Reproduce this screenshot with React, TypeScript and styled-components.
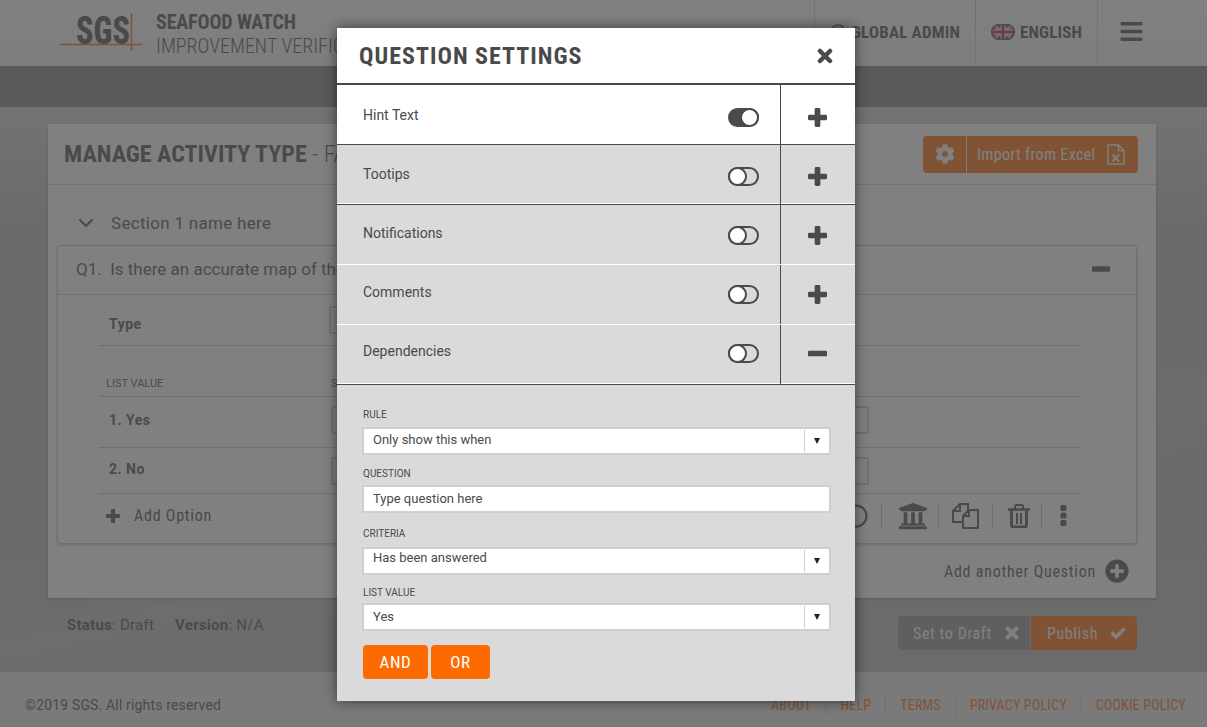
import React from 'react';
import styled, { createGlobalStyle, css } from 'styled-components';
import { FaBars, FaCog, FaPlusCircle, FaRegCircle, FaRegUserCircle, FaUniversity } from 'react-icons/fa';
import { ChevronDown } from 'lucide-react';

const GlobalStyle = createGlobalStyle`
  html, body {
    margin: 0;
    padding: 0;
    height: 100%;
    overflow: hidden;
  }
  body {
    font-family: Roboto, "Liberation Sans", sans-serif;
    color: #4a4a4a;
  }
  *, *::before, *::after {
    box-sizing: border-box;
  }
`;

const condensed = css`
  font-family: Roboto, "Liberation Sans", sans-serif;
  font-stretch: 75%;
`;

const settings = [
  { label: 'Hint Text', on: true, open: false, line: 'dark' },
  { label: 'Tootips', on: false, open: false, line: 'dark' },
  { label: 'Notifications', on: false, open: false, line: 'light' },
  { label: 'Comments', on: false, open: false, line: 'light' },
  { label: 'Dependencies', on: false, open: true, line: 'dark' },
];

const footerLinks = ['About', 'Help', 'Terms', 'Privacy Policy', 'Cookie Policy'];

const PlusIcon = ({ size }: { size: number }) => (
  <svg width={size} height={size} viewBox="0 0 20 20" fill="currentColor">
    <rect x="7" y="0" width="6" height="20" rx="1.5" />
    <rect x="0" y="7" width="20" height="6" rx="1.5" />
  </svg>
);

const MinusIcon = ({ size }: { size: number }) => (
  <svg width={size} height={size} viewBox="0 0 20 20" fill="currentColor">
    <rect x="0" y="7" width="20" height="6" rx="1" />
  </svg>
);

const CloseIcon = ({ size }: { size: number }) => (
  <svg width={size} height={size} viewBox="0 0 16 16" fill="none" stroke="currentColor" strokeWidth="4.5" strokeLinecap="round">
    <path d="M3 3L13 13M13 3L3 13" />
  </svg>
);

const CheckIcon = () => (
  <svg width="16" height="12" viewBox="0 0 16 12" fill="none" stroke="currentColor" strokeWidth="3.5">
    <path d="M1.5 5.5L6 10L14.5 1.5" />
  </svg>
);

const ExcelIcon = () => (
  <svg width="18" height="21" viewBox="0 0 18 21" fill="none" stroke="currentColor" strokeWidth="1.5">
    <path d="M1 1H11.5L17 6.5V20H1Z" />
    <path d="M11.5 1V6.5H17" />
    <path d="M5.5 10.5L12 17.5M12 10.5L5.5 17.5" strokeWidth="2" />
  </svg>
);

const FilesIcon = () => (
  <svg width="27" height="26" viewBox="0 0 27 26" fill="none" stroke="currentColor" strokeWidth="2">
    <path d="M16 7V1H8L1 8V19H10" />
    <path d="M8 1V8H1" />
    <path d="M17 7H26V25H11V13Z" />
    <path d="M17 7V13H11" />
  </svg>
);

const TrashIcon = () => (
  <svg width="22" height="24" viewBox="0 0 22 24" fill="none" stroke="currentColor">
    <path d="M7 5V2.5C7 1.7 7.7 1 8.5 1H13.5C14.3 1 15 1.7 15 2.5V5" strokeWidth="2" />
    <path d="M0 5.5H22" strokeWidth="2.5" />
    <path d="M3.5 6V21C3.5 22.1 4.4 23 5.5 23H16.5C17.6 23 18.5 22.1 18.5 21V6" strokeWidth="3" />
    <path d="M9 9V20M13 9V20" strokeWidth="2" />
  </svg>
);

const KebabIcon = () => (
  <svg width="7" height="21" viewBox="0 0 7 21" fill="currentColor">
    <rect x="0.5" y="0" width="6" height="6" rx="1.5" />
    <rect x="0.5" y="7.5" width="6" height="6" rx="1.5" />
    <rect x="0.5" y="15" width="6" height="6" rx="1.5" />
  </svg>
);

const UkFlag = () => (
  <FlagSvg viewBox="0 0 24 16">
    <clipPath id="pill">
      <rect width="24" height="16" rx="8" />
    </clipPath>
    <g clipPath="url(#pill)">
      <rect width="24" height="16" fill="#2b3a8c" />
      <path d="M0 0L24 16M24 0L0 16" stroke="#fff" strokeWidth="3" />
      <path d="M0 0L24 16M24 0L0 16" stroke="#d0212b" strokeWidth="1" />
      <path d="M12 0V16M0 8H24" stroke="#fff" strokeWidth="5" />
      <path d="M12 0V16M0 8H24" stroke="#d0212b" strokeWidth="3" />
    </g>
    <rect x="0.75" y="0.75" width="22.5" height="14.5" rx="7.25" fill="none" stroke="#555" strokeWidth="1.5" />
  </FlagSvg>
);

const SgsLogo = () => (
  <LogoSvg viewBox="0 -4 82 44">
    <text x="16" y="31" fontFamily="Roboto, sans-serif" fontWeight="800" fontSize="38" fontStretch="75%" fill="#4a4a4a" textLength="54" lengthAdjust="spacingAndGlyphs">
      SGS
    </text>
    <path d="M0 31.5H82M71.5 0V38" stroke="#ff6a00" strokeWidth="1.5" fill="none" />
  </LogoSvg>
);

const App: React.FC = () => {
  return (
    <Page>
      <GlobalStyle />
      <TopBar>
        <Brand>
          <SgsLogo />
          <BrandText>
            <BrandName>SEAFOOD WATCH</BrandName>
            <BrandSub>IMPROVEMENT VERIFICATION</BrandSub>
          </BrandText>
        </Brand>
        <NavItem $width={161}>
          <FaRegUserCircle size={16} />
          GLOBAL ADMIN
        </NavItem>
        <NavItem $width={122}>
          <UkFlag />
          ENGLISH
        </NavItem>
        <MenuItem>
          <FaBars size={25} />
        </MenuItem>
      </TopBar>
      <SubBar />

      <Main>
        <Card>
          <CardHeader>
            <CardTitle>
              <strong>MANAGE ACTIVITY TYPE</strong> - FARM ASSESSMENT
            </CardTitle>
            <ImportButton>
              <GearCell>
                <FaCog size={20} />
              </GearCell>
              <ImportCell>
                Import from Excel
                <ExcelIcon />
              </ImportCell>
            </ImportButton>
          </CardHeader>

          <SectionRow>
            <ChevronDown size={24} strokeWidth={2} />
            Section 1 name here
          </SectionRow>

          <QuestionCard>
            <QuestionHeader>
              <span>Q1.&nbsp; Is there an accurate map of the site?</span>
              <MinusIcon size={18} />
            </QuestionHeader>
            <QuestionBody>
              <TypeRow>
                <TypeLabel>Type</TypeLabel>
                <GhostBox $width={300} />
              </TypeRow>
              <ColumnHead>
                <span>LIST VALUE</span>
                <span>SCORE</span>
              </ColumnHead>
              <OptionRow $height={51} $bottom={5}>
                <RowLabel>1. Yes</RowLabel>
                <GhostBox $width={538} />
              </OptionRow>
              <OptionRow $height={46} $bottom={0}>
                <RowLabel $raise={4}>2. No</RowLabel>
                <GhostBox $width={538} />
              </OptionRow>
              <ToolRow>
                <AddOption>
                  <PlusIcon size={14} />
                  Add Option
                </AddOption>
                <Tools>
                  <CircleTool>
                    <FaRegCircle size={24} />
                  </CircleTool>
                  <Tool $width={57} $nudge={5}>
                    <FaUniversity size={30} />
                  </Tool>
                  <Tool $width={54}>
                    <FilesIcon />
                  </Tool>
                  <Tool $width={49} $nudge={3}>
                    <TrashIcon />
                  </Tool>
                  <Tool $width={42}>
                    <KebabIcon />
                  </Tool>
                </Tools>
              </ToolRow>
            </QuestionBody>
          </QuestionCard>

          <AddAnother>
            Add another Question
            <FaPlusCircle size={24} />
          </AddAnother>
        </Card>

        <StatusRow>
          <StatusText>
            <span>
              <strong>Status</strong>: Draft
            </span>
            <span>
              <strong>Version</strong>: N/A
            </span>
          </StatusText>
          <Actions>
            <DraftButton>
              Set to Draft
              <CloseIcon size={14} />
            </DraftButton>
            <PublishButton>
              Publish
              <CheckIcon />
            </PublishButton>
          </Actions>
        </StatusRow>
      </Main>

      <PageFooter>
        <span>©2019 SGS. All rights reserved</span>
        <FooterLinks>
          {footerLinks.map((link) => (
            <FooterLink key={link}>{link}</FooterLink>
          ))}
        </FooterLinks>
      </PageFooter>

      <Overlay>
        <Modal>
          <ModalHeader>
            <ModalTitle>QUESTION SETTINGS</ModalTitle>
            <CloseIcon size={16} />
          </ModalHeader>

          {settings.map((item, index) => (
            <SettingRow key={item.label} $first={index === 0} $line={item.line}>
              <SettingMain $shift={index}>
                <SettingLabel>{item.label}</SettingLabel>
                <Toggle $on={item.on} />
              </SettingMain>
              <SettingAction $shift={index}>
                {item.open ? <MinusIcon size={19} /> : <PlusIcon size={19} />}
              </SettingAction>
            </SettingRow>
          ))}

          <DependencyForm>
            <FieldLabel $top={24} $gap={6}>
              RULE
            </FieldLabel>
            <Select>
              <SelectValue $top={2}>Only show this when</SelectValue>
              <Caret />
            </Select>
            <FieldLabel $top={13} $gap={5}>
              QUESTION
            </FieldLabel>
            <TextField defaultValue="Type question here" />
            <FieldLabel $top={15} $gap={7}>
              CRITERIA
            </FieldLabel>
            <Select>
              <SelectValue $top={0}>Has been answered</SelectValue>
              <Caret />
            </Select>
            <FieldLabel $top={12} $gap={4}>
              LIST VALUE
            </FieldLabel>
            <Select>
              <SelectValue $top={3}>Yes</SelectValue>
              <Caret />
            </Select>
            <LogicButtons>
              <LogicButton $width={65}>AND</LogicButton>
              <LogicButton $width={59}>OR</LogicButton>
            </LogicButtons>
          </DependencyForm>
        </Modal>
      </Overlay>
    </Page>
  );
};

export default App;

const Page = styled.div`
  height: 100vh;
  display: flex;
  flex-direction: column;
  overflow: hidden;
  background:
    linear-gradient(168deg, transparent 62%, rgba(255, 255, 255, 0.12) 66%, transparent 72%),
    linear-gradient(180deg, #d4d4d4 15%, #b4b4b4 32%, #b8b8b8);
`;

const TopBar = styled.header`
  height: 66px;
  flex: none;
  display: flex;
  background: linear-gradient(180deg, #ffffff, #f6f6f6);
  box-shadow: 0 1px 3px rgba(0, 0, 0, 0.3);
`;

const Brand = styled.div`
  flex: 1;
  display: flex;
  align-items: flex-start;
  padding: 9px 0 0 60px;
`;

const LogoSvg = styled.svg`
  width: 82px;
  height: 44px;
  flex: none;
`;

const BrandText = styled.div`
  margin: 1px 0 0 14px;
`;

const BrandName = styled.div`
  ${condensed}
  font-size: 20px;
  line-height: 24px;
  font-weight: 700;
  letter-spacing: -0.15px;
`;

const BrandSub = styled.div`
  ${condensed}
  font-size: 20px;
  line-height: 24px;
  font-weight: 300;
`;

const NavItem = styled.div<{ $width: number }>`
  ${condensed}
  width: ${(p) => p.$width}px;
  padding: 0 0 2px 15px;
  display: flex;
  align-items: center;
  gap: 5px;
  border-left: 1px solid #d0d0d0;
  font-size: 17px;
  font-weight: 700;
  letter-spacing: 0.15px;
`;

const FlagSvg = styled.svg`
  width: 24px;
  height: 16px;
`;

const MenuItem = styled.div`
  width: 110px;
  border-left: 1px solid #d0d0d0;
  padding: 0 0 4px 21px;
  display: flex;
  align-items: center;
`;

const SubBar = styled.div`
  height: 41px;
  flex: none;
  background: #808080;
`;

const Main = styled.main`
  flex: 1;
  padding: 17px 51px 0 48px;
`;

const Card = styled.section`
  height: 474px;
  background: #fff;
  box-shadow: 0 1px 3px rgba(0, 0, 0, 0.25);
`;

const CardHeader = styled.div`
  height: 61px;
  padding: 0 18px 0 16px;
  display: flex;
  align-items: center;
  justify-content: space-between;
  border-bottom: 1px solid #d0d0d0;
`;

const CardTitle = styled.h1`
  ${condensed}
  margin: 0;
  font-size: 24px;
  font-weight: 300;
  white-space: nowrap;

  strong {
    font-weight: 700;
  }
`;

const ImportButton = styled.div`
  ${condensed}
  height: 37px;
  display: flex;
  color: #fff;
  font-size: 16px;
  letter-spacing: 0.35px;
  white-space: nowrap;
`;

const GearCell = styled.div`
  width: 44px;
  display: flex;
  align-items: center;
  justify-content: center;
  background: #ff6a00;
  border-radius: 4px 0 0 4px;
  border-right: 1px solid #fff;
`;

const ImportCell = styled.div`
  width: 171px;
  padding: 0 13px 0 10px;
  display: flex;
  align-items: center;
  justify-content: space-between;
  background: #ff6a00;
  border-radius: 0 4px 4px 0;
`;

const SectionRow = styled.div`
  height: 60px;
  padding: 16px 0 0 26px;
  display: flex;
  align-items: center;
  gap: 13px;
  font-size: 17px;
  letter-spacing: 0.3px;
`;

const QuestionCard = styled.div`
  height: 299px;
  margin: 0 19px 0 9px;
  border: 1px solid #c4c4c4;
  border-radius: 3px;
  box-shadow: 0 1px 3px rgba(0, 0, 0, 0.25);
`;

const QuestionHeader = styled.div`
  height: 49px;
  padding: 0 26px 2px 18px;
  display: flex;
  align-items: center;
  justify-content: space-between;
  font-size: 17px;
  border-bottom: 1px solid #c8c8c8;
`;

const QuestionBody = styled.div`
  padding: 0 56px 0 41px;
`;

const TypeRow = styled.div`
  height: 51px;
  padding-left: 10px;
  display: flex;
  align-items: center;
  border-bottom: 1px solid #c8c8c8;
`;

const RowLabel = styled.div<{ $raise?: number }>`
  width: 222px;
  margin-top: ${(p) => -(p.$raise ?? 0)}px;
  font-size: 14px;
  font-weight: 700;
  letter-spacing: 0.5px;
`;

const TypeLabel = styled(RowLabel)`
  width: 220px;
  margin-top: 7px;
`;

const GhostBox = styled.div<{ $width: number }>`
  width: ${(p) => p.$width}px;
  height: 28px;
  border: 2px solid #c8c8c8;
  border-radius: 2px;
`;

const ColumnHead = styled.div`
  height: 51px;
  padding: 0 0 6px 7px;
  display: grid;
  grid-template-columns: 225px 1fr;
  align-items: end;
  font-size: 11px;
  border-bottom: 1px solid #c8c8c8;
`;

const OptionRow = styled.div<{ $height: number; $bottom: number }>`
  height: ${(p) => p.$height}px;
  padding: 0 0 ${(p) => p.$bottom}px 10px;
  display: flex;
  align-items: center;
  border-bottom: 1px solid #c8c8c8;
`;

const ToolRow = styled.div`
  height: 49px;
  padding-bottom: 6px;
  display: flex;
  align-items: center;
  justify-content: space-between;
  margin-right: -4px;
`;

const AddOption = styled.div`
  ${condensed}
  padding-left: 7px;
  display: flex;
  align-items: center;
  gap: 14px;
  font-size: 16px;
  letter-spacing: 0.75px;
`;

const Tools = styled.div`
  display: flex;
  align-items: center;
`;

const Tool = styled.div<{ $width: number; $nudge?: number }>`
  width: ${(p) => p.$width}px;
  height: 26px;
  padding-left: ${(p) => p.$nudge ?? 0}px;
  display: flex;
  align-items: center;
  justify-content: center;
  border-right: 1px solid #c8c8c8;

  &:last-child {
    border-right: none;
  }
`;

const CircleTool = styled.div`
  width: 50px;
  height: 26px;
  padding-right: 13px;
  display: flex;
  align-items: center;
  justify-content: flex-end;
  border-right: 1px solid #c8c8c8;
`;

const AddAnother = styled.div`
  ${condensed}
  height: 54px;
  padding-right: 27px;
  display: flex;
  align-items: center;
  justify-content: flex-end;
  gap: 9px;
  font-size: 16px;
  letter-spacing: 0.75px;
`;

const StatusRow = styled.div`
  padding: 18px 19px 0 19px;
  display: flex;
  align-items: flex-start;
  justify-content: space-between;
`;

const StatusText = styled.div`
  padding-top: 1px;
  display: flex;
  gap: 21px;
  font-size: 15px;
  line-height: 17px;
  letter-spacing: 0.25px;
`;

const Actions = styled.div`
  ${condensed}
  display: flex;
  gap: 1px;
  color: #fff;
  font-size: 16px;
  letter-spacing: 0.6px;
`;

const DraftButton = styled.div`
  width: 132px;
  height: 34px;
  padding: 0 11px 0 15px;
  display: flex;
  align-items: center;
  justify-content: space-between;
  background: #8f8f8f;
  border-radius: 4px 0 0 4px;
`;

const PublishButton = styled.div`
  width: 106px;
  height: 34px;
  padding: 0 11px 0 16px;
  display: flex;
  align-items: center;
  justify-content: space-between;
  background: #ff6a00;
  border-radius: 0 4px 4px 0;
`;

const PageFooter = styled.footer`
  height: 55px;
  flex: none;
  padding: 22px 7px 0 25px;
  display: flex;
  align-items: flex-start;
  justify-content: space-between;
  background: #e9e9e9;
  font-size: 14px;
  line-height: 22px;
  letter-spacing: 0.16px;
`;

const FooterLinks = styled.nav`
  display: flex;
`;

const FooterLink = styled.a`
  ${condensed}
  padding: 0 14px;
  border-left: 1px solid #c8c8c8;
  color: #ff6a00;
  font-size: 14px;
  letter-spacing: 0.2px;
  text-transform: uppercase;

  &:first-child {
    border-left: none;
  }
`;

const Overlay = styled.div`
  position: absolute;
  inset: 0;
  background: rgba(74, 74, 74, 0.7);
`;

const Modal = styled.div`
  position: absolute;
  left: 337px;
  top: 28px;
  width: 518px;
  height: 673px;
  background: #dadada;
  box-shadow: 0 0 12px rgba(0, 0, 0, 0.55);
`;

const ModalHeader = styled.div`
  height: 57px;
  padding: 0 22px 0 22px;
  display: flex;
  align-items: center;
  justify-content: space-between;
  background: #fff;
  border-bottom: 2px solid #4a4a4a;
`;

const ModalTitle = styled.h2`
  ${condensed}
  margin: 0;
  font-size: 24px;
  font-weight: 700;
  letter-spacing: 1px;
`;

const SettingRow = styled.div<{ $first: boolean; $line: string }>`
  height: 60px;
  display: flex;
  background: ${(p) => (p.$first ? '#fff' : '#dadada')};
  border-bottom: 1px solid ${(p) => (p.$line === 'dark' ? '#4a4a4a' : '#fff')};
  box-shadow: ${(p) => (p.$line === 'dark' && !p.$first ? 'inset 0 -1px 0 #fff' : 'none')};
`;

const SettingMain = styled.div<{ $shift: number }>`
  flex: 1;
  padding: ${(p) => 23 - p.$shift}px 21px 0 26px;
  display: flex;
  align-items: flex-start;
  justify-content: space-between;
  border-right: 1px solid #4a4a4a;
`;

const SettingLabel = styled.div`
  margin-top: -2px;
  font-size: 14px;
  line-height: 18px;
`;

const Toggle = styled.div<{ $on: boolean }>`
  position: relative;
  width: 31px;
  height: 19px;
  border: 2px solid #4a4a4a;
  border-radius: 10px;
  background: ${(p) => (p.$on ? '#4a4a4a' : 'transparent')};

  &::after {
    content: '';
    position: absolute;
    top: -2px;
    left: ${(p) => (p.$on ? '10px' : '-2px')};
    width: 19px;
    height: 19px;
    border: 2px solid #4a4a4a;
    border-radius: 50%;
    background: #fff;
  }
`;

const SettingAction = styled.div<{ $shift: number }>`
  width: 74px;
  padding: ${(p) => 23 - p.$shift}px 2px 0 0;
  display: flex;
  justify-content: center;
  align-items: flex-start;
`;

const DependencyForm = styled.div`
  padding: 0 24px 0 25px;
`;

const FieldLabel = styled.div<{ $top: number; $gap: number }>`
  margin: ${(p) => p.$top}px 1px ${(p) => p.$gap}px;
  font-size: 10px;
  line-height: 12px;
`;

const Select = styled.div`
  height: 28px;
  display: flex;
  background: #fff;
  border: 2px solid #cfcfcf;
  border-radius: 2px;
  font-size: 13px;
`;

const SelectValue = styled.div<{ $top: number }>`
  flex: 1;
  padding: ${(p) => p.$top}px 8px 0 9px;
  line-height: 18px;
`;

const Caret = styled.div`
  width: 25px;
  display: flex;
  align-items: center;
  justify-content: center;
  margin: 1px 0;
  border-left: 1px solid #cfcfcf;

  &::after {
    content: '';
    border-style: solid;
    border-width: 6px 3.5px 0;
    border-color: #222 transparent transparent;
  }
`;

const TextField = styled.input`
  display: block;
  width: 100%;
  height: 28px;
  padding: 0 9px 2px;
  background: #fff;
  border: 2px solid #cfcfcf;
  border-radius: 2px;
  outline: none;
  font-family: Roboto, sans-serif;
  font-size: 13px;
  color: #4a4a4a;
`;

const LogicButtons = styled.div`
  margin: 14px 0 0 1px;
  display: flex;
  gap: 3px;
`;

const LogicButton = styled.button<{ $width: number }>`
  ${condensed}
  width: ${(p) => p.$width}px;
  height: 34px;
  padding: 0;
  border: none;
  border-radius: 4px;
  background: #ff6a00;
  color: #fff;
  font-size: 17px;
  letter-spacing: 0.6px;
`;
